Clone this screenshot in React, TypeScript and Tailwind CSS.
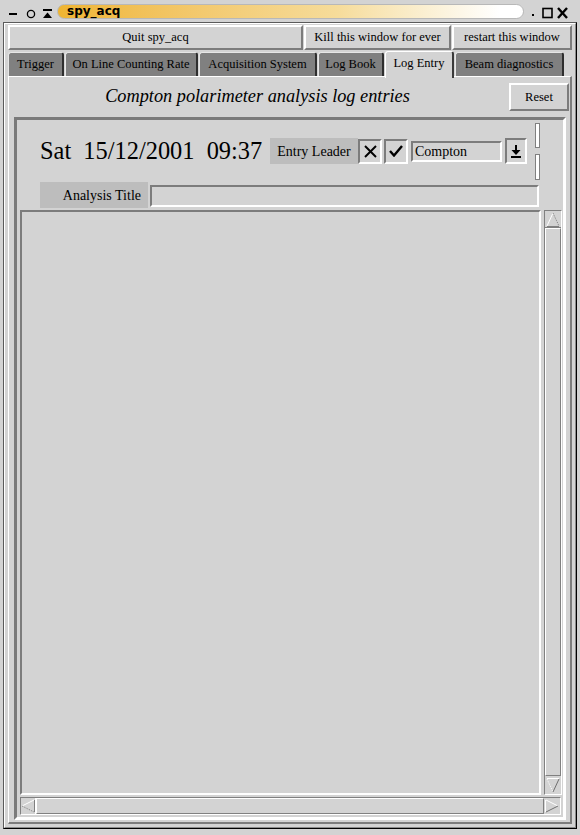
import React from "react";

const raised =
  "border-t-2 border-l-2 border-t-white border-l-white border-b-2 border-r-2 border-b-[#7c7c7c] border-r-[#7c7c7c]";
const sunken =
  "border-t-2 border-l-2 border-t-[#7c7c7c] border-l-[#7c7c7c] border-b-2 border-r-2 border-b-white border-r-white";

function Tab({ label, w, selected }: { label: string; w: string; selected?: boolean }) {
  if (selected) {
    return (
      <div
        className={`${w} h-[27px] -mt-[1px] relative z-10 bg-[#d3d3d3] border-t border-l border-t-white border-l-white border-r-2 border-r-[#3a3a3a] rounded-t-[3px] flex items-start pt-[2px] justify-center text-[12.5px] text-black`}
      >
        {label}
      </div>
    );
  }
  return (
    <div
      className={`${w} h-[24px] bg-[#808080] border-t border-l border-t-[#e6e6e6] border-l-[#e6e6e6] border-r-2 border-r-[#2e2e2e] rounded-t-[3px] flex items-center justify-center text-[12.5px] text-black`}
    >
      {label}
    </div>
  );
}

function UpArrow() {
  return (
    <svg width="14" height="15" viewBox="0 0 14 15">
      <line x1="1" y1="14" x2="7" y2="1" stroke="white" strokeWidth="1" />
      <line x1="7" y1="1" x2="13" y2="14" stroke="#808080" strokeWidth="1" strokeDasharray="1 1" />
      <line x1="1" y1="14.5" x2="13" y2="14.5" stroke="#808080" strokeWidth="1" />
    </svg>
  );
}
function DownArrow() {
  return (
    <svg width="14" height="15" viewBox="0 0 14 15">
      <line x1="1" y1="1" x2="7" y2="14" stroke="white" strokeWidth="1" strokeDasharray="1 1" />
      <line x1="7" y1="14" x2="13" y2="1" stroke="#707070" strokeWidth="1" />
      <line x1="1" y1="0.5" x2="13" y2="0.5" stroke="white" strokeWidth="1" />
    </svg>
  );
}
function LeftArrow() {
  return (
    <svg width="14" height="14" viewBox="0 0 14 14">
      <line x1="13" y1="1" x2="1" y2="7" stroke="white" strokeWidth="1" />
      <line x1="1" y1="7" x2="13" y2="13" stroke="#808080" strokeWidth="1" strokeDasharray="1 1" />
      <line x1="13.5" y1="1" x2="13.5" y2="13" stroke="#808080" strokeWidth="1" />
    </svg>
  );
}
function RightArrow() {
  return (
    <svg width="14" height="14" viewBox="0 0 14 14">
      <line x1="1" y1="1" x2="13" y2="7" stroke="white" strokeWidth="1" />
      <line x1="13" y1="7" x2="1" y2="13" stroke="#707070" strokeWidth="1" />
      <line x1="0.5" y1="1" x2="0.5" y2="13" stroke="white" strokeWidth="1" />
    </svg>
  );
}

export default function App() {
  return (
    <div className="w-[580px] h-[835px] bg-[#d3d3d3] flex flex-col font-['Liberation_Serif','Times_New_Roman',serif] text-black overflow-hidden">
      {/* Title bar */}
      <div className="h-[22px] flex items-center relative shrink-0">
        <svg width="57" height="22" viewBox="0 0 57 22" className="shrink-0">
          <line x1="9" y1="14" x2="17" y2="14" stroke="black" strokeWidth="2" />
          <circle cx="31" cy="14" r="3.6" fill="none" stroke="black" strokeWidth="1.3" />
          <rect x="43" y="9" width="9" height="2" fill="black" />
          <polygon points="43,18 52,18 47.5,12.5" fill="black" />
        </svg>
        <div className="w-[467px] h-[15px] rounded-full border border-[#b8b8b8] bg-linear-to-r from-[#efb531] via-[#f6dc9a] via-60% to-white to-95% flex items-center pl-[9px]">
          <span className="font-['DejaVu_Sans','Liberation_Sans',sans-serif] font-bold text-[12px] leading-none text-black">
            spy_acq
          </span>
        </div>
        <svg width="56" height="22" viewBox="0 0 56 22" className="shrink-0">
          <rect x="8" y="14" width="2" height="2" fill="black" />
          <rect x="19" y="8.5" width="9" height="9" fill="none" stroke="black" strokeWidth="1.6" />
          <line x1="34" y1="8" x2="43" y2="18" stroke="black" strokeWidth="2.4" />
          <line x1="43" y1="8" x2="34" y2="18" stroke="black" strokeWidth="2.4" />
        </svg>
      </div>

      {/* Window frame */}
      <div className="flex-1 mx-[3px] mb-[6px] border border-t-[#5a5a5a] border-l-[#5a5a5a] border-r-black border-b-black flex flex-col min-h-0">
        <div className="flex-1 border border-t-white border-l-white border-r-[#8a8a8a] border-b-[#8a8a8a] pl-[3px] pr-[3px] pt-px pb-[3px] flex flex-col min-h-0">
          {/* Buttons row */}
          <div className="h-[25px] flex gap-[1px] shrink-0 text-[12.5px]">
            <div className={`w-[295px] h-full ${raised} flex items-center justify-center`}>Quit spy_acq</div>
            <div className={`w-[147px] h-full ${raised} flex items-center justify-center`}>
              Kill this window for ever
            </div>
            <div className={`w-[120px] h-full ${raised} flex items-center justify-center`}>restart this window</div>
          </div>

          {/* Tabs */}
          <div className="h-[24px] mt-[2px] flex items-start gap-[1px] shrink-0">
            <Tab label="Trigger" w="w-[56px]" />
            <Tab label="On Line Counting Rate" w="w-[133px]" />
            <Tab label="Acquisition System" w="w-[118px]" />
            <Tab label="Log Book" w="w-[66px]" />
            <Tab label="Log Entry" w="w-[69px]" selected />
            <Tab label="Beam diagnostics" w="w-[109px]" />
          </div>

          {/* Panel */}
          <div className="flex-1 border-t border-l border-t-white border-l-white border-r-2 border-b-2 border-r-[#7c7c7c] border-b-[#7c7c7c] flex flex-col min-h-0">
            <div className="h-[40px] flex items-center pl-[5px] pr-px shrink-0">
              <div className="flex-1 text-center italic text-[18.3px] pr-[8px]">
                Compton polarimeter analysis log entries
              </div>
              <div className={`w-[60px] h-[28px] ${raised} flex items-center justify-center text-[12.5px]`}>Reset</div>
            </div>

            {/* Groove frame */}
            <div className="flex-1 ml-[5px] mr-[4px] mb-[2px] border-[3px] border-t-[#7a7a7a] border-l-[#7a7a7a] border-r-white border-b-white flex flex-col min-h-0">
              {/* Date row */}
              <div className="h-[62px] flex items-center pl-[23px] shrink-0">
                <div className="w-[230px] text-[24.4px] whitespace-pre leading-none">Sat  15/12/2001  09:37</div>
                <div className="w-[88px] h-[26px] bg-[#bdbdbd] flex items-center justify-center text-[14px]">
                  Entry Leader
                </div>
                <div className={`w-[24px] h-[25px] ${sunken} border-t border-l border-b border-r flex items-center justify-center`}>
                  <svg width="13" height="13" viewBox="0 0 13 13">
                    <line x1="1" y1="1" x2="12" y2="12" stroke="black" strokeWidth="2" />
                    <line x1="12" y1="1" x2="1" y2="12" stroke="black" strokeWidth="2" />
                  </svg>
                </div>
                <div className={`ml-[2px] w-[24px] h-[25px] ${sunken} border-t border-l border-b border-r flex items-center justify-center`}>
                  <svg width="14" height="12" viewBox="0 0 14 12">
                    <polyline points="1,6 5,10.5 13,1" fill="none" stroke="black" strokeWidth="2.4" />
                  </svg>
                </div>
                <div className={`ml-[3px] w-[91px] h-[21px] ${sunken} flex items-center pl-[2px] text-[14px]`}>Compton</div>
                <div className={`ml-[3px] w-[22px] h-[26px] ${sunken} flex items-center justify-center`}>
                  <svg width="10" height="13" viewBox="0 0 10 13">
                    <rect x="4" y="0" width="2" height="5" fill="black" />
                    <polygon points="0.5,5 9.5,5 5,10" fill="black" />
                    <rect x="0" y="11" width="10" height="2" fill="black" />
                  </svg>
                </div>
                <div className="ml-[8px] flex flex-col gap-[6px]">
                  <div className="w-[5px] h-[25px] border border-[#808080] bg-white" />
                  <div className="w-[5px] h-[26px] border border-[#808080] bg-white" />
                </div>
              </div>

              {/* Analysis title row */}
              <div className="h-[26px] flex pl-[23px] shrink-0">
                <div className="w-[108px] h-[26px] bg-[#bdbdbd] flex items-center justify-end pr-[7px] text-[14px]">
                  Analysis Title
                </div>
                <div className={`ml-[2px] mt-[3px] w-[389px] h-[22px] ${sunken}`} />
              </div>

              {/* Text area + scrollbars */}
              <div className="flex-1 flex flex-col pl-[3px] pt-[2px] pb-[2px] min-h-0">
                <div className="flex-1 flex gap-[3px] min-h-0">
                  <div className={`w-[521px] h-full ${sunken}`} />
                  <div className="w-[18px] h-full border border-t-[#808080] border-l-[#808080] border-r-white border-b-white flex flex-col">
                    <div className="h-[17px] flex items-center justify-center border-b border-b-[#808080]">
                      <UpArrow />
                    </div>
                    <div className="flex-1 border-t border-l border-t-white border-l-white border-r border-b border-r-[#808080] border-b-[#808080]" />
                    <div className="h-[18px] flex items-center justify-center border-t border-t-[#d3d3d3]">
                      <DownArrow />
                    </div>
                  </div>
                </div>
                <div className="mt-[2px] w-[541px] h-[18px] border border-t-[#808080] border-l-[#808080] border-r-white border-b-white flex shrink-0">
                  <div className="w-[15px] flex items-center justify-center border-r border-r-white">
                    <LeftArrow />
                  </div>
                  <div className="flex-1 border-t border-l border-t-white border-l-white border-r border-b border-r-[#808080] border-b-[#808080]" />
                  <div className="w-[16px] flex items-center justify-center">
                    <RightArrow />
                  </div>
                </div>
              </div>
            </div>
          </div>
        </div>
      </div>
    </div>
  );
}
